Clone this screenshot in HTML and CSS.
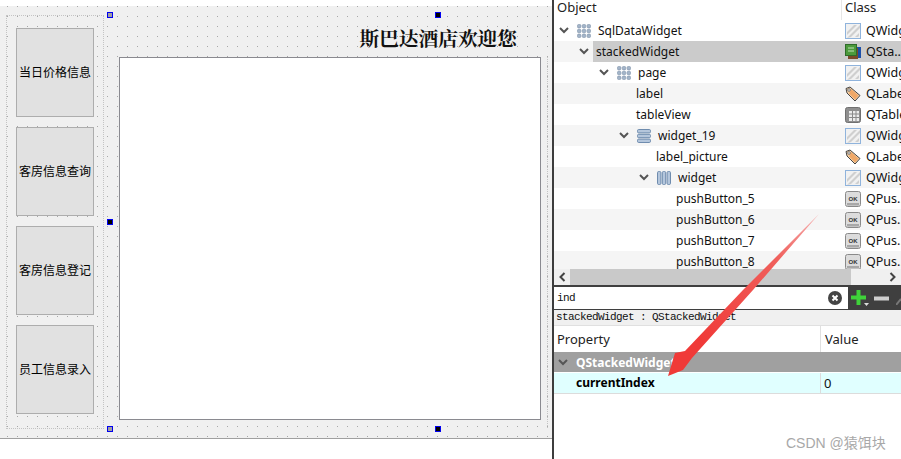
FILE: index.html
```html
<!DOCTYPE html>
<html lang="zh">
<head>
<meta charset="utf-8">
<title>Qt Designer</title>
<link rel="stylesheet" href="styles.css">
</head>
<body>
<svg class="defs" width="0" height="0" aria-hidden="true">
  <defs>
    <symbol id="chev" viewBox="0 0 10 7"><path d="M1 1l4 4 4-4" fill="none" stroke="#555" stroke-width="2"/></symbol>
    <symbol id="grid" viewBox="0 0 14 14">
      <g fill="#a3b4c8" stroke="#7f93ab" stroke-width=".6">
        <rect x=".5" y=".5" width="3.4" height="3.4" rx="1"/><rect x="5.3" y=".5" width="3.4" height="3.4" rx="1"/><rect x="10.1" y=".5" width="3.4" height="3.4" rx="1"/>
        <rect x=".5" y="5.3" width="3.4" height="3.4" rx="1"/><rect x="5.3" y="5.3" width="3.4" height="3.4" rx="1"/><rect x="10.1" y="5.3" width="3.4" height="3.4" rx="1"/>
        <rect x=".5" y="10.1" width="3.4" height="3.4" rx="1"/><rect x="5.3" y="10.1" width="3.4" height="3.4" rx="1"/><rect x="10.1" y="10.1" width="3.4" height="3.4" rx="1"/>
      </g>
    </symbol>
    <symbol id="vbox" viewBox="0 0 14 14">
      <g fill="#b4c6dc" stroke="#6f8cae"><rect x=".5" y=".5" width="13" height="3.4" rx="1.2"/><rect x=".5" y="5.3" width="13" height="3.4" rx="1.2"/><rect x=".5" y="10.1" width="13" height="3.4" rx="1.2"/></g>
    </symbol>
    <symbol id="hbox" viewBox="0 0 14 14">
      <g fill="#b4c6dc" stroke="#6f8cae"><rect x=".5" y=".5" width="3.4" height="13" rx="1.2"/><rect x="5.3" y=".5" width="3.4" height="13" rx="1.2"/><rect x="10.1" y=".5" width="3.4" height="13" rx="1.2"/></g>
    </symbol>
    <symbol id="widget" viewBox="0 0 16 16">
      <rect x=".5" y=".5" width="15" height="15" fill="#f1f1f1" stroke="#8fb3dc"/>
      <path d="M2 9l7-7h3L2 12zM2 15l13-13v3L6 14zM10 14l4-4v3l-1 1z" fill="#cfcfcf"/>
    </symbol>
    <symbol id="stack" viewBox="0 0 16 16">
      <rect x="5" y="3" width="11" height="11" fill="#1c4fa8"/>
      <rect x="3" y="4" width="10" height="11" fill="#7a4a2a"/>
      <rect x=".5" y=".5" width="11" height="11" fill="#4c9a3c" stroke="#2f6b2a"/>
      <path d="M3 4h6M3 7h6" stroke="#bfe0b5"/>
    </symbol>
    <symbol id="tag" viewBox="0 0 16 16">
      <path d="M1 2.500L5 1l10 8.500-5 5.500L2 7z" fill="#f6d2a8" stroke="#444"/>
      <path d="M6 3l7.500 6.500-3.500 4-6-6z" fill="#efa868"/>
      <circle cx="4" cy="4" r="1.300" fill="#fff" stroke="#444" stroke-width=".7"/>
    </symbol>
    <symbol id="table" viewBox="0 0 16 16">
      <rect x=".5" y=".5" width="15" height="15" rx="2" fill="#8f8f8f" stroke="#707070"/>
      <rect x="4" y="4" width="10" height="10" fill="#ececec"/>
      <path d="M4 7h10M4 10.500h10M7.500 4v10M11 4v10" stroke="#8a8a8a"/>
    </symbol>
    <symbol id="okbtn" viewBox="0 0 16 16">
      <rect x=".5" y=".5" width="15" height="15" rx="2" fill="#dcdcdc" stroke="#8a8a8a"/>
      <rect x="2" y="12" width="12" height="2.500" fill="#a8a8a8"/>
      <text x="8" y="9.500" text-anchor="middle" class="oktext">OK</text>
    </symbol>
    <symbol id="chl" viewBox="0 0 7 10"><path d="M6 1L2 5l4 4" fill="none" stroke="#444" stroke-width="2"/></symbol>
    <symbol id="chr" viewBox="0 0 7 10"><path d="M1 1l4 4-4 4" fill="none" stroke="#444" stroke-width="2"/></symbol>
  </defs>
</svg>

<main class="app">
  <section class="designer">
    <div class="form">
      <div class="nav-layout">
        <button class="nav-btn">当日价格信息</button>
        <button class="nav-btn">客房信息查询</button>
        <button class="nav-btn">客房信息登记</button>
        <button class="nav-btn">员工信息录入</button>
      </div>
      <div class="stage">
        <h1 class="welcome">斯巴达酒店欢迎您</h1>
        <div class="frame-slot"><div class="frame"></div></div>
      </div>
      <span class="handle off h-tl"></span>
      <span class="handle on h-tc"></span>
      <span class="handle on h-ml"></span>
      <span class="handle off h-bl"></span>
      <span class="handle on h-bc"></span>
    </div>
  </section>

  <aside class="side">
    <div class="obj-head"><span class="oh-name">Object</span><span class="oh-class">Class</span></div>
    <div class="tree">
      <div class="row lv0"><svg class="chev"><use href="#chev"/></svg><svg class="ico"><use href="#grid"/></svg><span class="name">SqlDataWidget</span><span class="cls"><svg class="cico"><use href="#widget"/></svg>QWidget</span></div>
      <div class="row alt lv1 sel"><svg class="chev"><use href="#chev"/></svg><span class="name">stackedWidget</span><span class="cls"><svg class="cico"><use href="#stack"/></svg>QSta..</span></div>
      <div class="row lv2"><svg class="chev"><use href="#chev"/></svg><svg class="ico"><use href="#grid"/></svg><span class="name">page</span><span class="cls"><svg class="cico"><use href="#widget"/></svg>QWidget</span></div>
      <div class="row alt lv3 leaf"><span class="name">label</span><span class="cls"><svg class="cico"><use href="#tag"/></svg>QLabel</span></div>
      <div class="row lv3 leaf"><span class="name">tableView</span><span class="cls"><svg class="cico"><use href="#table"/></svg>QTableView</span></div>
      <div class="row alt lv3"><svg class="chev"><use href="#chev"/></svg><svg class="ico"><use href="#vbox"/></svg><span class="name">widget_19</span><span class="cls"><svg class="cico"><use href="#widget"/></svg>QWidget</span></div>
      <div class="row lv4 leaf"><span class="name">label_picture</span><span class="cls"><svg class="cico"><use href="#tag"/></svg>QLabel</span></div>
      <div class="row alt lv4"><svg class="chev"><use href="#chev"/></svg><svg class="ico"><use href="#hbox"/></svg><span class="name">widget</span><span class="cls"><svg class="cico"><use href="#widget"/></svg>QWidget</span></div>
      <div class="row lv5 leaf"><span class="name">pushButton_5</span><span class="cls"><svg class="cico"><use href="#okbtn"/></svg>QPus..</span></div>
      <div class="row alt lv5 leaf"><span class="name">pushButton_6</span><span class="cls"><svg class="cico"><use href="#okbtn"/></svg>QPus..</span></div>
      <div class="row lv5 leaf"><span class="name">pushButton_7</span><span class="cls"><svg class="cico"><use href="#okbtn"/></svg>QPus..</span></div>
      <div class="row alt lv5 leaf"><span class="name">pushButton_8</span><span class="cls"><svg class="cico"><use href="#okbtn"/></svg>QPus..</span></div>
    </div>
    <div class="hscroll">
      <svg class="sc-arrow"><use href="#chl"/></svg>
      <div class="sc-track"><div class="sc-thumb"></div></div>
      <svg class="sc-arrow"><use href="#chr"/></svg>
    </div>
    <div class="filter">
      <div class="filter-input">
        <span class="filter-text">ind</span>
        <svg class="clear" viewBox="0 0 14 14"><circle cx="7" cy="7" r="7" fill="#444"/><path d="M4.500 4.500l5 5M9.500 4.500l-5 5" stroke="#fff" stroke-width="2"/></svg>
      </div>
      <svg class="tb-plus" viewBox="0 0 19 17"><path d="M5.500 0h4v5.500H15v4H9.500V15h-4V9.500H0v-4h5.500z" fill="#3fd23a"/><path d="M13 13h5l-2.500 3z" fill="#ddd"/></svg>
      <svg class="tb-minus" viewBox="0 0 15 5"><rect width="15" height="4" y=".5" fill="#cfcfcf"/></svg>
      <svg class="tb-wrench" viewBox="0 0 6 8"><path d="M0 8l5-6" stroke="#777" stroke-width="2" fill="none"/></svg>
    </div>
    <div class="crumb">stackedWidget : QStackedWidget</div>
    <div class="prop-head"><span class="p-name">Property</span><span class="p-value">Value</span></div>
    <div class="prop-group"><svg class="chev gchev"><use href="#chev"/></svg><span>QStackedWidget</span></div>
    <div class="prop-row"><span class="p-key">currentIndex</span><span class="p-val">0</span></div>
  </aside>
</main>

<svg class="arrow" viewBox="0 0 901 459" aria-hidden="true">
  <defs>
    <linearGradient id="ar" gradientUnits="userSpaceOnUse" x1="819" y1="214" x2="700" y2="340">
      <stop offset="0" stop-color="#f6b0b0"/><stop offset=".35" stop-color="#f0605c"/><stop offset="1" stop-color="#f03a38"/>
    </linearGradient>
  </defs>
  <polygon points="819,214 753,290 692,358 683,370 668,376 675,353 685,351 743,290" fill="url(#ar)"/>
</svg>
<div class="watermark">CSDN @猿饵块</div>
</body>
</html>
```

FILE: styles.css
```css
* { box-sizing: border-box; }
html, body { margin: 0; padding: 0; height: 100%; overflow: hidden; background: #fff; }
body { position: relative; width: 901px; height: 459px; font-family: "Noto Sans", "Noto Sans CJK SC", sans-serif; font-size: 12px; color: #111; }
.defs { position: absolute; }
.app { display: flex; height: 459px; }

/* form designer */
.designer { width: 552px; flex: none; padding-top: 6px; }
.form {
  position: relative;
  display: flex;
  height: 433px;
  padding: 9px 0 9px 6px;
  background-color: #f0f0f0;
  background-image: conic-gradient(from 270deg at 1px 1px, #a8a8a8 25%, transparent 0);
  background-size: 10px 10px;
  background-position: 7px 0;
  border-bottom: 1px solid #a0a0a0;
}
.nav-layout {
  width: 98px;
  display: flex;
  flex-direction: column;
  gap: 10px;
  padding: 12px 9px 14px;
  border: 1px dotted #c4c4c4;
  flex: none;
}
.nav-btn {
  height: 89px;
  width: 78px;
  padding: 0 0 2px;
  background: #e1e1e1;
  border: 1px solid #adadad;
  font: 12px "Noto Sans CJK SC", sans-serif;
  color: #000;
  white-space: nowrap;
}
.stage { width: 429px; margin-left: 15px; display: flex; flex-direction: column; padding-bottom: 1px; }
.welcome {
  height: 42px;
  margin: 0;
  padding: 10px 31px 0 0;
  text-align: right;
  font: 700 19.700px/26px "Noto Serif CJK SC", "Noto Sans CJK SC", serif;
  color: #111;
}
.frame-slot { flex: 1; padding: 0 6px 8px 0; border-right: 1px dotted #c4c4c4; }
.frame { height: 100%; background: #fff; border: 1px solid #8a8a90; }

.handle { position: absolute; width: 6px; height: 6px; border: 1px solid #0000f0; }
.handle.off { background: #a0a0a0; }
.handle.on { background: #000; }
.h-tl { left: 107px; top: 6px; }
.h-tc { left: 435px; top: 6px; }
.h-ml { left: 107px; top: 213px; }
.h-bl { left: 107px; top: 420px; }
.h-bc { left: 435px; top: 420px; }

/* right side */
.side { width: 349px; flex: none; border-left: 2px solid #3d3d3d; overflow: hidden; }
.obj-head { display: flex; height: 20px; color: #222; font-size: 13px; line-height: 15px; }
.oh-name { width: 288px; padding-left: 3px; flex: none; height: 20px; border-right: 1px solid #e6e6e6; }
.oh-class { padding-left: 3px; height: 20px; }

.tree { height: 249px; overflow: hidden; }
.row { position: relative; display: flex; align-items: center; height: 21px; width: 347px; white-space: nowrap; overflow: hidden; }
.row.alt { background: #f5f5f5; }
.lv0 { padding-left: 2px; }
.lv1 { padding-left: 22px; }
.lv2 { padding-left: 42px; }
.lv3 { padding-left: 62px; }
.lv4 { padding-left: 82px; }
.lv5 { padding-left: 102px; }
.chev { width: 10px; height: 7px; margin: 0 7px 0 3px; flex: none; }
.ico { width: 14px; height: 14px; margin: 0 7px 0 1px; flex: none; }
.leaf .name { padding-left: 20px; }
.name { flex: 1; min-width: 0; line-height: 21px; height: 21px; }
.sel .name { background: #cbcbcb; margin-left: -3px; padding-left: 3px; }
.sel .cls { background: #cbcbcb; }
.cls { width: 59px; height: 21px; flex: none; display: flex; align-items: center; overflow: hidden; padding-left: 3px; font-size: 12.500px; }
.cico { width: 16px; height: 16px; margin-right: 5px; flex: none; }
.oktext { font: 700 6px "Liberation Sans", sans-serif; fill: #333; }

.hscroll { display: flex; height: 16px; background: #f0f0f0; align-items: center; }
.sc-arrow { width: 16px; height: 10px; flex: none; }
.sc-track { flex: 1; height: 16px; }
.sc-thumb { width: 281px; height: 16px; background: #c9c9c9; }

.filter { display: flex; align-items: center; height: 25px; background: #3f3f3f; padding: 2px 0 1px 0; }
.filter-input { width: 294px; height: 22px; background: #fff; display: flex; align-items: center; justify-content: space-between; padding: 0 6px 0 3px; flex: none; }
.filter-text { font: 11px "Liberation Mono", monospace; color: #111; letter-spacing: -.6px; }
.clear { width: 14px; height: 14px; }
.tb-plus { width: 19px; height: 17px; margin-left: 3px; flex: none; }
.tb-minus { width: 15px; height: 5px; margin-left: 4px; flex: none; }
.tb-wrench { width: 6px; height: 8px; margin: 6px 0 0 7px; flex: none; }

.crumb { height: 16px; background: #f0f0f0; border-bottom: 1px solid #e0e0e0; padding-left: 2px; font: 11px/15px "Liberation Mono", monospace; letter-spacing: -.6px; color: #111; white-space: nowrap; }
.prop-head { display: flex; height: 26px; line-height: 27px; color: #222; font-size: 13px; }
.p-name { width: 267px; padding-left: 3px; border-right: 1px solid #e0e0e0; flex: none; }
.p-value { padding-left: 4px; }
.prop-group { display: flex; align-items: center; height: 20px; background: #a0a0a0; color: #fff; font-weight: 700; margin-bottom: 1px; }
.gchev { margin: 0 8px 0 4px; }
.prop-row { display: flex; height: 21px; line-height: 20px; background: #e0ffff; border-bottom: 1px solid #dcdcdc; }
.p-key { width: 267px; padding-left: 22px; font-weight: 700; color: #000; border-right: 1px solid #dcdcdc; flex: none; }
.p-val { padding-left: 3px; font-size: 13px; }

/* overlays */
.arrow { position: absolute; left: 0; top: 0; width: 901px; height: 459px; pointer-events: none; }
.watermark { position: absolute; left: 786px; top: 434px; font: 14px/18px "Liberation Sans", "Noto Sans CJK SC", sans-serif; color: #a8a8a8; white-space: nowrap; }
```
